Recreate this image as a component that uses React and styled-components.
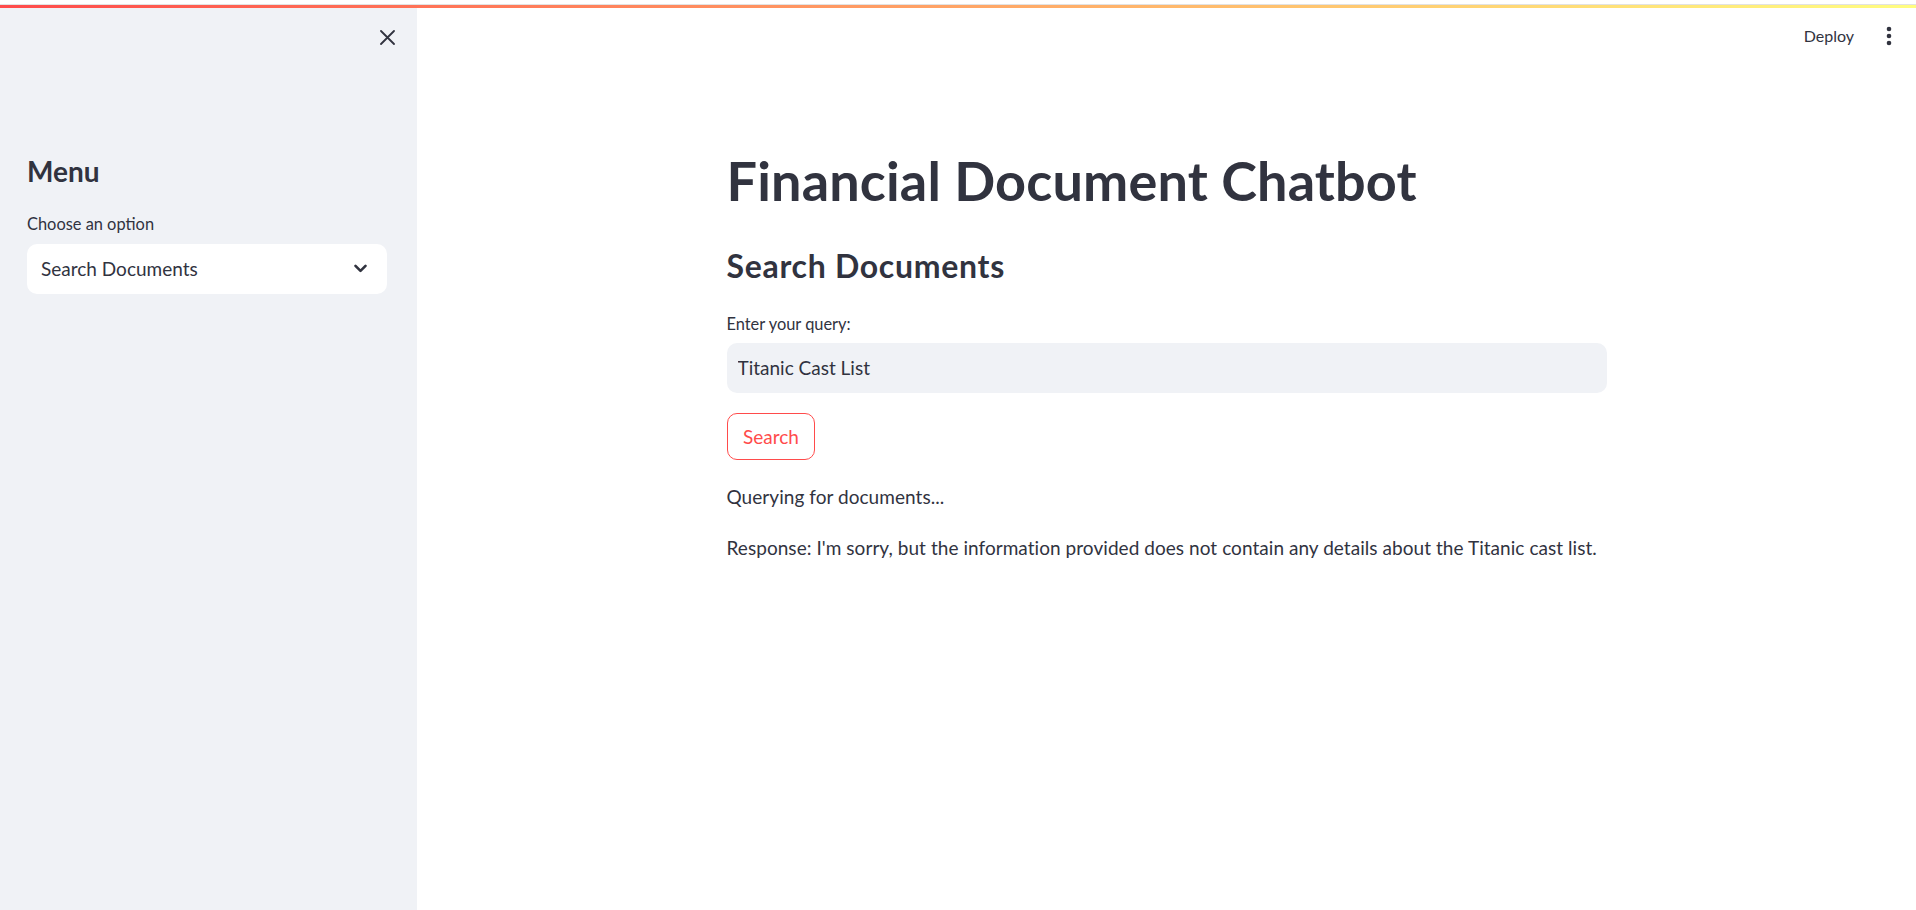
import React from "react";
import styled, { createGlobalStyle } from "styled-components";

const Global = createGlobalStyle`
  html, body { margin: 0; padding: 0; height: 100%; background: #ffffff; }
  body { font-family: Lato, "Noto Sans", sans-serif; color: #31333f; overflow: hidden; }
  #root { height: 100%; }
  * { box-sizing: border-box; }
`;

const Frame = styled.div`
  display: flex;
  flex-direction: column;
  height: 910px;
  width: 1916px;
`;

const BrowserEdge = styled.div`
  height: 5px;
  flex: none;
  background: #ffffff;
  border-bottom: 1px solid #e2e2e2;
`;

const Decoration = styled.div`
  height: 2.5px;
  flex: none;
  background: linear-gradient(90deg, rgb(255, 75, 75), rgb(255, 253, 128));
`;

const Body = styled.div`
  flex: 1;
  display: flex;
  min-height: 0;
`;

const Sidebar = styled.aside`
  width: 417px;
  flex: none;
  background: #f0f2f6;
  display: flex;
  flex-direction: column;
  padding: 0 30px 0 27px;
`;

const SidebarTop = styled.div`
  height: 59px;
  display: flex;
  align-items: center;
  justify-content: flex-end;
  margin-right: -12px;
`;

const IconButton = styled.button`
  width: 24px;
  height: 24px;
  padding: 0;
  border: none;
  background: transparent;
  display: flex;
  align-items: center;
  justify-content: center;
  color: #31333f;
  cursor: pointer;
`;

const SideHeading = styled.h2`
  margin: 86px 0 0;
  font-size: 28px;
  line-height: 36px;
  font-weight: 700;
  color: #31333f;
`;

const WidgetLabel = styled.label`
  display: block;
  font-size: 16.4px;
  line-height: 22px;
  color: #31333f;
  margin-top: ${(p) => p.$top || 0}px;
`;

const SelectBox = styled.div`
  margin-top: 9px;
  height: 50px;
  background: #ffffff;
  border-radius: 10px;
  display: flex;
  align-items: center;
  justify-content: space-between;
  padding: 0 20px 0 14px;
  font-size: 19px;
  color: #31333f;
`;

const Main = styled.main`
  flex: 1;
  display: flex;
  flex-direction: column;
  min-width: 0;
`;

const Header = styled.header`
  height: 56px;
  flex: none;
  display: flex;
  align-items: center;
  justify-content: flex-end;
  gap: 23px;
  padding-right: 15px;
`;

const DeployButton = styled.button`
  border: none;
  background: transparent;
  padding: 0;
  font-family: Lato, "Noto Sans", sans-serif;
  font-size: 16px;
  color: #31333f;
  cursor: pointer;
`;

const Block = styled.section`
  width: 880px;
  margin: 0 auto;
  padding-top: 84px;
  display: flex;
  flex-direction: column;
`;

const Title = styled.h1`
  margin: 0;
  font-size: 54px;
  line-height: 66px;
  font-weight: 700;
  color: #31333f;
  letter-spacing: 0.15px;
`;

const SubTitle = styled.h3`
  margin: 32px 0 0;
  font-size: 32px;
  line-height: 40px;
  font-weight: 700;
  color: #31333f;
  letter-spacing: 0.7px;
`;

const TextInput = styled.input`
  margin-top: 8px;
  height: 50px;
  width: 100%;
  border: none;
  outline: none;
  border-radius: 10px;
  background: #f0f2f6;
  padding: 0 11px;
  font-family: Lato, "Noto Sans", sans-serif;
  font-size: 19px;
  color: #31333f;
`;

const ActionRow = styled.div`
  margin-top: 20px;
  display: flex;
`;

const OutlineButton = styled.button`
  height: 47px;
  padding: 0 15.5px;
  border: 1px solid #ff4b4b;
  border-radius: 10px;
  background: #ffffff;
  color: #ff4b4b;
  font-family: Lato, "Noto Sans", sans-serif;
  font-size: 19px;
  cursor: pointer;
`;

const Para = styled.p`
  margin: 21px 0 0;
  font-size: 19px;
  line-height: 32px;
  color: #31333f;
  letter-spacing: 0.05px;
  & + & { margin-top: 19px; }
`;

const CloseIcon = () => (
  <svg width="15" height="15" viewBox="0 0 15 15" fill="none">
    <path d="M1 1 L14 14 M14 1 L1 14" stroke="#31333f" strokeWidth="1.8" strokeLinecap="round" />
  </svg>
);

const Chevron = () => (
  <svg width="13" height="9" viewBox="0 0 13 9" fill="none">
    <path d="M1.5 1.8 L6.5 6.8 L11.5 1.8" stroke="#31333f" strokeWidth="2.6" strokeLinecap="round" strokeLinejoin="round" />
  </svg>
);

const Kebab = () => (
  <svg width="6" height="20" viewBox="0 0 6 20">
    <circle cx="3" cy="3" r="2.3" fill="#31333f" />
    <circle cx="3" cy="10" r="2.3" fill="#31333f" />
    <circle cx="3" cy="17" r="2.3" fill="#31333f" />
  </svg>
);

export default function App() {
  return (
    <>
      <Global />
      <Frame>
        <BrowserEdge />
        <Decoration />
        <Body>
          <Sidebar>
            <SidebarTop>
              <IconButton aria-label="Close sidebar">
                <CloseIcon />
              </IconButton>
            </SidebarTop>
            <SideHeading>Menu</SideHeading>
            <WidgetLabel $top={24}>Choose an option</WidgetLabel>
            <SelectBox>
              <span>Search Documents</span>
              <Chevron />
            </SelectBox>
          </Sidebar>
          <Main>
            <Header>
              <DeployButton>Deploy</DeployButton>
              <IconButton aria-label="Main menu">
                <Kebab />
              </IconButton>
            </Header>
            <Block>
              <Title>Financial Document Chatbot</Title>
              <SubTitle>Search Documents</SubTitle>
              <WidgetLabel $top={27}>Enter your query:</WidgetLabel>
              <TextInput defaultValue="Titanic Cast List" />
              <ActionRow>
                <OutlineButton>Search</OutlineButton>
              </ActionRow>
              <Para>Querying for documents...</Para>
              <Para>
                Response: I'm sorry, but the information provided does not contain any details about the Titanic cast list.
              </Para>
            </Block>
          </Main>
        </Body>
      </Frame>
    </>
  );
}
